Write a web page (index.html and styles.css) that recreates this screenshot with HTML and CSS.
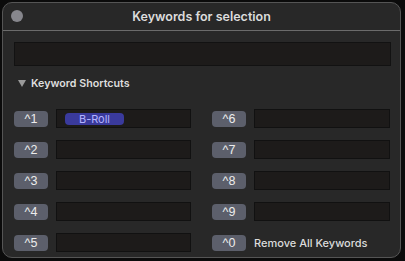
FILE: index.html
```html
<!DOCTYPE html>
<html lang="en">
<head>
  <meta charset="UTF-8" />
  <title>Keywords for selection</title>
  <link rel="stylesheet" href="styles.css">
</head>
<body>
  <div class="window">
    <div class="titlebar">
      <span class="close"></span>
      <span class="title">Keywords for selection</span>
    </div>

    <div class="content">
      <div class="search"></div>

      <div class="section-head">
        <span class="disclosure"></span>
        Keyword Shortcuts
      </div>

      <div class="shortcuts">
        <div class="row"><button class="key">^1</button><div class="field"><span class="tag">B-Roll</span></div></div>
        <div class="row"><button class="key">^6</button><div class="field"></div></div>
        <div class="row"><button class="key">^2</button><div class="field"></div></div>
        <div class="row"><button class="key">^7</button><div class="field"></div></div>
        <div class="row"><button class="key">^3</button><div class="field"></div></div>
        <div class="row"><button class="key">^8</button><div class="field"></div></div>
        <div class="row"><button class="key">^4</button><div class="field"></div></div>
        <div class="row"><button class="key">^9</button><div class="field"></div></div>
        <div class="row"><button class="key">^5</button><div class="field"></div></div>
        <div class="row"><button class="key">^0</button><span class="remove">Remove All Keywords</span></div>
      </div>
    </div>
  </div>
</body>
</html>
```

FILE: styles.css
```css
body {
  margin: 0;
  padding: 2px 0 0 2px;
  background: #0b0b0b;
  font-family: Inter, 'Liberation Sans', sans-serif;
  width: 405px;
  height: 261px;
  box-sizing: border-box;
  overflow: hidden;
}

.window {
  width: 399px;
  height: 256px;
  box-sizing: border-box;
  background: #282828;
  border: 1px solid #555;
  border-radius: 10px;
  overflow: hidden;
}

.titlebar {
  position: relative;
  height: 27px;
  border-bottom: 1px solid #6b6b6b;
  display: flex;
  align-items: center;
  justify-content: center;
}

.close {
  position: absolute;
  left: 8px;
  top: 7px;
  width: 12px;
  height: 12px;
  border-radius: 50%;
  background: #86868c;
}

.title {
  color: #dcdcdc;
  font-size: 12.5px;
  font-weight: 600;
}

.content {
  padding: 11px 9px 0 11px;
}

.search {
  height: 24px;
  box-sizing: border-box;
  background: #1d1b1a;
  border: 1px solid #121212;
}

.section-head {
  display: flex;
  align-items: center;
  height: 14px;
  margin: 10px 0 19px 4px;
  color: #dedede;
  font-size: 10.7px;
  font-weight: 600;
}

.disclosure {
  width: 0;
  height: 0;
  border-left: 4px solid transparent;
  border-right: 4px solid transparent;
  border-top: 7px solid #9a9a9a;
  margin-right: 5px;
}

.shortcuts {
  display: grid;
  grid-template-columns: 177px 178px;
  column-gap: 21px;
  row-gap: 12px;
}

.row {
  display: flex;
  align-items: center;
  gap: 8px;
  height: 19px;
}

.key {
  width: 34px;
  height: 16px;
  flex: none;
  padding: 0;
  border: none;
  border-radius: 4px;
  background: #5c5f6b;
  color: #ececec;
  font-family: 'Liberation Sans', sans-serif;
  font-size: 12.5px;
  line-height: 16px;
}

.field {
  flex: 1;
  height: 19px;
  box-sizing: border-box;
  background: #1d1b1a;
  border: 1px solid #111;
  display: flex;
  align-items: center;
  padding-left: 8px;
}

.tag {
  width: 59px;
  height: 12px;
  border-radius: 4px;
  background: #3a3a9c;
  color: #b4b4ff;
  font-size: 11px;
  line-height: 12px;
  text-align: center;
}

.remove {
  color: #dcdcdc;
  font-size: 11px;
  font-weight: 500;
}
```
